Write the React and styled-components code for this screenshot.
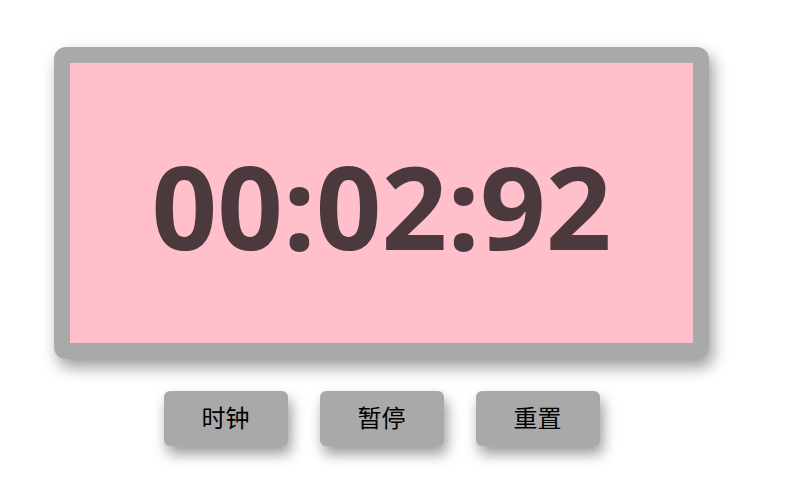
import React, { useState } from "react";
import styled, { createGlobalStyle } from "styled-components";

const Global = createGlobalStyle`
  html, body { margin: 0; padding: 0; background: #ffffff; min-height: 100%; }
  body { font-family: "Open Sans", "Noto Sans CJK SC", sans-serif; }
`;

const Page = styled.div`
  padding: 47px 0 40px 54px;
  width: 655px;
`;

const Display = styled.div`
  box-sizing: border-box;
  width: 655px;
  height: 312px;
  background: #ffc0cb;
  border: 16px solid #a9a9a9;
  border-radius: 12px;
  box-shadow: 4px 8px 16px rgba(0, 0, 0, 0.4);
  display: flex;
  align-items: center;
  justify-content: center;
`;

const Time = styled.div`
  font-family: "Open Sans", sans-serif;
  font-weight: 700;
  font-size: 115px;
  line-height: 1;
  color: rgba(0, 0, 0, 0.7);
  padding-top: 4px;
`;

const Controls = styled.div`
  display: flex;
  justify-content: center;
  gap: 32px;
  margin-top: 32px;
`;

const Button = styled.button`
  width: 124px;
  height: 55px;
  border: none;
  border-radius: 6px;
  background: #a9a9a9;
  color: #000;
  font-family: "Noto Sans CJK SC", sans-serif;
  font-weight: 400;
  font-size: 24px;
  line-height: 1;
  box-shadow: 3px 8px 14px rgba(0, 0, 0, 0.4);
  cursor: pointer;
  padding: 0 0 4px;
`;

const pad = (n) => String(n).padStart(2, "0");

export default function App() {
  const [ticks] = useState(292);
  const mm = Math.floor(ticks / 6000);
  const ss = Math.floor((ticks % 6000) / 100);
  const cs = ticks % 100;
  return (
    <>
      <Global />
      <Page>
        <Display>
          <Time>{`${pad(mm)}:${pad(ss)}:${pad(cs)}`}</Time>
        </Display>
        <Controls>
          <Button>时钟</Button>
          <Button>暂停</Button>
          <Button>重置</Button>
        </Controls>
      </Page>
    </>
  );
}
